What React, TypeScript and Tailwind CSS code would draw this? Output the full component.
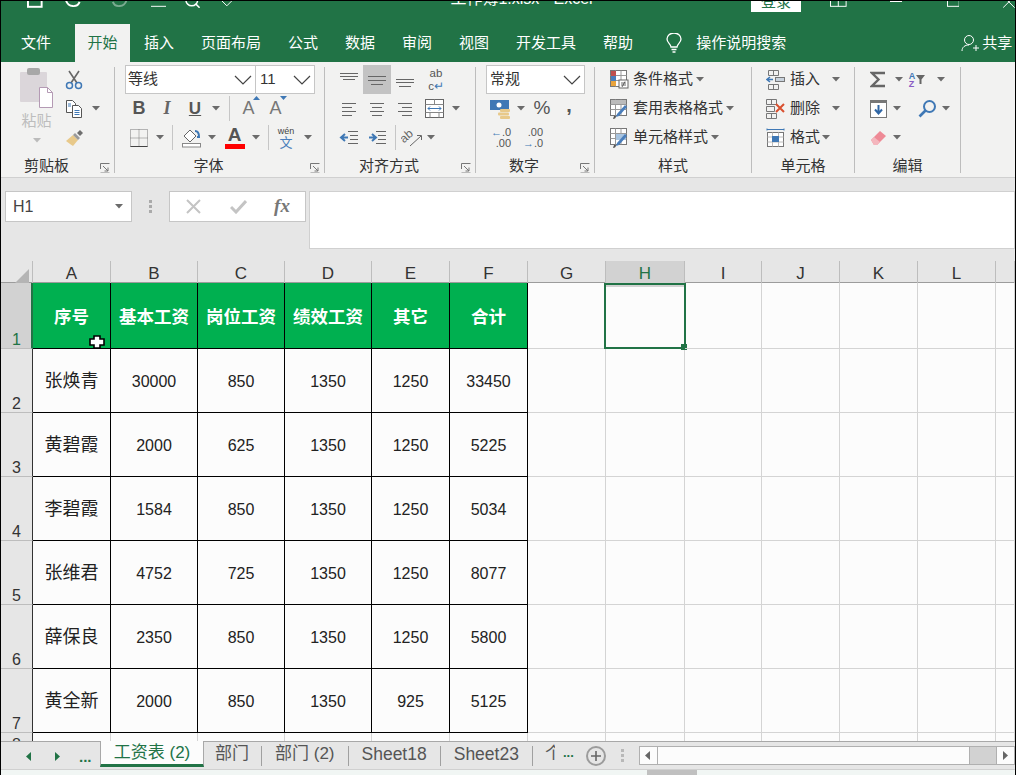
import type { ReactNode } from "react";

const green = "#217346";

const Caret = ({ className = "" }: { className?: string }) => (
  <svg width="8" height="5" viewBox="0 0 8 5" className={className}>
    <path d="M0 0h8L4 4.5z" fill="#6b6b6b" />
  </svg>
);

const Chevron = () => (
  <svg width="18" height="10" viewBox="0 0 18 10" fill="none" stroke="#444" strokeWidth="1.2">
    <path d="M1 1l8 8 8-8" />
  </svg>
);

const Launcher = () => (
  <svg width="10" height="10" viewBox="0 0 10 10" fill="none" stroke="#777">
    <path d="M.5 6V.5H9.5M3 3l5 5M8 4.5V8H4.5" />
    <path d="M.5 9.5h9" stroke="#bbb" />
  </svg>
);

const S = ({ c, children }: { c: string; children?: ReactNode }) => (
  <div className={"flex h-full items-center justify-center " + c}>{children}</div>
);

const Row = ({ c = "", children }: { c?: string; children: ReactNode }) => (
  <div className={"flex h-[29px] items-center whitespace-nowrap " + c}>{children}</div>
);

const VSep = ({ c }: { c: string }) => <div className={"h-[25px] w-px bg-[#c6c6c6] " + c} />;

const Lines = ({ ys, xs }: { ys: number[]; xs: [number, number][] }) => (
  <svg width="20" height="16" viewBox="0 0 20 16" stroke="#666" strokeWidth="1">
    {ys.map((y, i) => (
      <path key={i} d={`M${xs[i][0]} ${y + 0.5}H${xs[i][1]}`} />
    ))}
  </svg>
);

const Group = ({
  w,
  label,
  launcher,
  children,
}: {
  w: string;
  label: string;
  launcher?: boolean;
  children: ReactNode;
}) => (
  <div className={"flex h-[115px] flex-col pt-[3px] " + w}>
    <div className="h-[90px]">{children}</div>
    <div className="flex h-[22px] items-center text-[15px] text-[#333]">
      <span className="flex-1 text-center">{label}</span>
      {launcher && (
        <span className="flex w-[22px] justify-center pl-[3px] pt-[4px]">
          <Launcher />
        </span>
      )}
    </div>
  </div>
);

const Sep = () => <div className="mt-[5px] h-[106px] w-px bg-[#bdbdbd]" />;

const GridIcon = ({ tone }: { tone: "cond" | "table" | "cell" }) => (
  <svg width="22" height="22" viewBox="0 0 22 22" fill="none">
    <rect x="2.5" y="1.5" width="16" height="16" fill="#fff" stroke="#777" />
    <path d="M2.5 6.5h16M2.5 11.5h16M7.5 1.5v16M13 1.5v16" stroke="#999" />
    {tone === "cond" && (
      <>
        <rect x="3" y="2" width="5" height="5" fill="#c0504d" />
        <rect x="3" y="7" width="5" height="5" fill="#4a7ebb" />
        <rect x="3" y="12" width="5" height="5" fill="#e8a33d" />
        <rect x="11" y="11" width="9" height="8" fill="#fff" stroke="#666" />
        <path d="M13 14h5M13 16h5M17 12.5l-3 5.5" stroke="#444" strokeWidth=".8" />
      </>
    )}
    {tone === "table" && (
      <>
        <rect x="3" y="2" width="15" height="4" fill="#bbb" />
        <path d="M8 19l3-1 8-9-2-2-8 9z" fill="#4a7ebb" />
        <path d="M5 21c2 0 3-1 3-3l-2 0z" fill="#555" />
      </>
    )}
    {tone === "cell" && (
      <>
        <rect x="8" y="7" width="10" height="6" fill="#a8c4e0" />
        <path d="M8 19l3-1 8-9-2-2-8 9z" fill="#4a7ebb" />
        <path d="M5 21c2 0 3-1 3-3l-2 0z" fill="#555" />
      </>
    )}
  </svg>
);

const Ribbon = () => (
  <div className="flex h-[116px] border-b border-[#d0d0d0] bg-[#f2f2f1]">
    <Group w="w-[113px]" label="剪贴板" launcher>
      <div className="flex h-full">
        <div className="flex w-[61px] flex-col items-center pl-[10px] pt-[3px]">
          <svg width="36" height="40" viewBox="0 0 36 40">
            <rect x="1" y="4" width="27" height="30" rx="1" fill="#dbd6da" />
            <rect x="8" y="0" width="13" height="7" rx="2" fill="#a8a8a8" />
            <path d="M20.5 19.5h8l5 5v15h-13z" fill="#fff" stroke="#b49ab4" />
            <path d="M28.5 19.5v5h5" fill="none" stroke="#b49ab4" />
          </svg>
          <span className="mt-[3px] text-[15px] leading-[20px] text-[#bdbdbd]">粘贴</span>
          <Caret className="mt-[7px] opacity-40" />
        </div>
        <div className="flex flex-col">
          <Row>
            <S c="w-[24px]">
              <svg width="18" height="20" viewBox="0 0 18 20" fill="none">
                <path d="M4 1l8 12M14 1L6 13" stroke="#666" strokeWidth="1.6" />
                <circle cx="4.5" cy="15.5" r="3" stroke="#3f78b5" strokeWidth="1.5" />
                <circle cx="13.5" cy="15.5" r="3" stroke="#3f78b5" strokeWidth="1.5" />
              </svg>
            </S>
          </Row>
          <Row>
            <S c="w-[24px]">
              <svg width="18" height="20" viewBox="0 0 18 20" fill="none">
                <path d="M1.5 1.5h6l3 3v9h-9z" fill="#fff" stroke="#555" />
                <path d="M7.5 6.5h6l3 3v9h-9z" fill="#fff" stroke="#555" />
                <path d="M9.5 11.5h5M9.5 13.5h5M9.5 15.5h5" stroke="#3f78b5" />
                <path d="M3 5h3M3 7h3" stroke="#3f78b5" />
              </svg>
            </S>
            <Caret className="ml-[6px]" />
          </Row>
          <Row>
            <S c="w-[26px]">
              <svg width="20" height="18" viewBox="0 0 20 18">
                <path d="M1 12l7-6 5 5-5 6-3-2z" fill="#e8c98a" />
                <path d="M8 6l5 5 2-2-5-5z" fill="#9a9a9a" />
                <path d="M12 4l3-3 3 3-3 3z" fill="#6f6f6f" />
              </svg>
            </S>
          </Row>
        </div>
      </div>
    </Group>
    <Sep />
    <Group w="w-[209px]" label="字体" launcher>
      <div className="pl-[10px]">
        <div className="flex h-[29px]">
          <div className="flex w-[131px] items-center justify-between border border-[#c6c6c6] bg-white pl-[2px] pr-[3px] text-[15px] text-[#333]">
            等线
            <Chevron />
          </div>
          <div className="-ml-px flex w-[60px] items-center justify-between border border-[#c6c6c6] bg-white pl-[4px] pr-[3px] text-[15px] text-[#333]">
            11
            <Chevron />
          </div>
        </div>
        <Row>
          <S c="w-[28px] text-[18px] font-bold text-[#555]">B</S>
          <S c="w-[28px] text-[18px] font-bold italic text-[#666] [font-family:'Liberation_Serif']">I</S>
          <S c="w-[28px] text-[17px] font-bold text-[#555] underline">U</S>
          <S c="w-[14px]">
            <Caret />
          </S>
          <VSep c="ml-[6px]" />
          <S c="w-[27px] ml-[5px]">
            <span className="relative text-[18px] text-[#777]">
              A
              <svg width="7" height="4" viewBox="0 0 7 4" className="absolute -right-[5px] top-[1px]">
                <path d="M0 4h7L3.5 0z" fill="#3f78b5" />
              </svg>
            </span>
          </S>
          <S c="w-[27px]">
            <span className="relative text-[18px] text-[#777]">
              A
              <svg width="7" height="4" viewBox="0 0 7 4" className="absolute -right-[5px] top-[1px]">
                <path d="M0 0h7L3.5 4z" fill="#3f78b5" />
              </svg>
            </span>
          </S>
        </Row>
        <Row>
          <S c="w-[28px]">
            <svg width="18" height="18" viewBox="0 0 18 18" fill="none" stroke="#777" strokeDasharray="1 1">
              <path d="M.5.5h17v17H.5zM9 .5v17M.5 9h17" />
              <path d="M.5 17.5h17" stroke="#444" strokeDasharray="0" />
            </svg>
          </S>
          <S c="w-[14px]">
            <Caret />
          </S>
          <VSep c="ml-[5px]" />
          <S c="w-[27px] ml-[5px]">
            <svg width="21" height="20" viewBox="0 0 21 20" fill="none">
              <path d="M3 8l6-6 6 6-6 6z" fill="#fff" stroke="#666" />
              <path d="M14 3c3 0 4 3 4 6l-2 0" stroke="#3f78b5" strokeWidth="2" />
              <rect x="1.5" y="15.5" width="18" height="3.5" fill="#fff" stroke="#888" />
            </svg>
          </S>
          <S c="w-[14px]">
            <Caret />
          </S>
          <S c="w-[29px] ml-px">
            <div className="flex flex-col items-center">
              <span className="text-[19px] font-bold leading-[17px] text-[#555]">A</span>
              <span className="mt-[1px] h-[5px] w-[20px] bg-[#ff0000]" />
            </div>
          </S>
          <S c="w-[14px]">
            <Caret />
          </S>
          <VSep c="ml-[5px]" />
          <S c="w-[26px] ml-[4px]">
            <div className="flex flex-col items-center leading-none text-[#4a7ebb]">
              <span className="text-[9px] text-[#444]">wén</span>
              <span className="text-[13px]">文</span>
            </div>
          </S>
          <S c="w-[14px] ml-[2px]">
            <Caret />
          </S>
        </Row>
      </div>
    </Group>
    <Sep />
    <Group w="w-[150px]" label="对齐方式" launcher>
      <div className="pl-[10px]">
        <Row>
          <S c="w-[28px]">
            <Lines ys={[1, 4, 7]} xs={[[1, 19], [1, 19], [4, 16]]} />
          </S>
          <S c="w-[28px] bg-[#c3c3c3]">
            <Lines ys={[4, 8, 12]} xs={[[1, 19], [1, 19], [4, 16]]} />
          </S>
          <S c="w-[28px]">
            <Lines ys={[7, 10, 14]} xs={[[1, 19], [1, 19], [4, 16]]} />
          </S>
          <S c="w-[28px] ml-[3px]">
            <div className="flex flex-col items-center text-[11.5px] leading-[13px] text-[#555]">
              <span>ab</span>
              <span>
                c<span className="text-[#3f78b5]">↵</span>
              </span>
            </div>
          </S>
        </Row>
        <Row>
          <S c="w-[28px]">
            <Lines ys={[2, 6, 10, 14]} xs={[[3, 17], [3, 13], [3, 17], [3, 13]]} />
          </S>
          <S c="w-[28px]">
            <Lines ys={[2, 6, 10, 14]} xs={[[3, 17], [5, 15], [3, 17], [5, 15]]} />
          </S>
          <S c="w-[28px]">
            <Lines ys={[2, 6, 10, 14]} xs={[[3, 17], [7, 17], [3, 17], [7, 17]]} />
          </S>
          <S c="w-[28px] ml-[2px]">
            <svg width="20" height="20" viewBox="0 0 20 20" fill="none">
              <rect x=".5" y=".5" width="18" height="18" fill="#fff" stroke="#666" />
              <path d="M.5 5.5h18M.5 13.5h18M9.5.5v5M5 13.5v5M14 13.5v5" stroke="#888" />
              <path d="M3 9.5h13M5 7.5l-2 2 2 2M14 7.5l2 2-2 2" stroke="#3f78b5" />
            </svg>
          </S>
          <S c="w-[14px]">
            <Caret />
          </S>
        </Row>
        <Row>
          <S c="w-[28px]">
            <svg width="20" height="16" viewBox="0 0 20 16" fill="none">
              <path d="M9 1.5h10M11 5.5h8M11 9.5h8M9 13.5h10" stroke="#666" />
              <path d="M9 7.5H3M6 4L2 7.5 6 11" stroke="#3f78b5" strokeWidth="2" />
            </svg>
          </S>
          <S c="w-[28px]">
            <svg width="20" height="16" viewBox="0 0 20 16" fill="none">
              <path d="M9 1.5h10M11 5.5h8M11 9.5h8M9 13.5h10" stroke="#666" />
              <path d="M2 7.5h6M5 4l4 3.5L5 11" stroke="#3f78b5" strokeWidth="2" />
            </svg>
          </S>
          <VSep c="ml-[4px]" />
          <S c="w-[26px] ml-[3px]">
            <svg width="22" height="20" viewBox="0 0 22 20" fill="none">
              <text x="0" y="12" fontSize="12" fill="#666" transform="rotate(-40 6 10)" fontFamily="Liberation Sans">
                ab
              </text>
              <path d="M9 18L20 8M16 7.5h4.5V12" stroke="#666" />
            </svg>
          </S>
          <S c="w-[12px]">
            <Caret />
          </S>
        </Row>
      </div>
    </Group>
    <Sep />
    <Group w="w-[118px]" label="数字" launcher>
      <div className="pl-[10px]">
        <div className="flex h-[29px] w-[99px] items-center justify-between border border-[#c6c6c6] bg-white pl-[3px] pr-[3px] text-[15px] text-[#333]">
          常规
          <Chevron />
        </div>
        <Row>
          <S c="w-[26px] ml-[2px]">
            <svg width="22" height="20" viewBox="0 0 22 20">
              <rect x="0" y="1" width="19" height="10" fill="#3f78b5" />
              <circle cx="9" cy="6" r="2.5" fill="#fff" />
              <rect x="10" y="10" width="10" height="3" rx="1" fill="#e8c98a" />
              <rect x="8" y="13.5" width="11" height="3" rx="1" fill="#e8c98a" />
              <rect x="10" y="17" width="10" height="3" rx="1" fill="#e8c98a" />
            </svg>
          </S>
          <S c="w-[14px]">
            <Caret />
          </S>
          <S c="w-[28px] text-[19px] text-[#555]">%</S>
          <S c="w-[26px] pb-[8px] text-[20px] font-bold leading-none text-[#555]">,</S>
        </Row>
        <Row>
          <S c="w-[26px] ml-[2px]">
            <div className="flex flex-col items-end text-[11px] leading-[11px] text-[#555]">
              <span>
                <span className="text-[#3f78b5]">←</span>.0
              </span>
              <span>.00</span>
            </div>
          </S>
          <S c="w-[32px] ml-[3px]">
            <div className="flex flex-col items-end text-[11px] leading-[11px] text-[#555]">
              <span>.00</span>
              <span>
                <span className="text-[#3f78b5]">→</span>.0
              </span>
            </div>
          </S>
        </Row>
      </div>
    </Group>
    <Sep />
    <Group w="w-[156px]" label="样式">
      <div className="pl-[12px] text-[15px] text-[#333]">
        <Row>
          <S c="w-[24px]">
            <GridIcon tone="cond" />
          </S>
          <span className="ml-[2px]">条件格式</span>
          <Caret className="ml-[3px]" />
        </Row>
        <Row>
          <S c="w-[24px]">
            <GridIcon tone="table" />
          </S>
          <span className="ml-[2px]">套用表格格式</span>
          <Caret className="ml-[3px]" />
        </Row>
        <Row>
          <S c="w-[24px]">
            <GridIcon tone="cell" />
          </S>
          <span className="ml-[2px]">单元格样式</span>
          <Caret className="ml-[3px]" />
        </Row>
      </div>
    </Group>
    <Sep />
    <Group w="w-[102px]" label="单元格">
      <div className="pl-[12px] text-[15px] text-[#333]">
        <Row>
          <S c="w-[24px]">
            <svg width="20" height="20" viewBox="0 0 20 20" fill="none" stroke="#777">
              <path d="M2.5.5h10v5h-10zM2.5 14.5h10v5h-10zM7.5.5v5M7.5 14.5v5" />
              <rect x="9.5" y="7.5" width="9" height="4" fill="#c9d3dd" />
              <path d="M1 9.5h6M4 7l-3 2.5L4 12" stroke="#3f78b5" strokeWidth="1.5" />
            </svg>
          </S>
          <span className="ml-[2px]">插入</span>
          <Caret className="ml-[12px]" />
        </Row>
        <Row>
          <S c="w-[24px]">
            <svg width="20" height="20" viewBox="0 0 20 20" fill="none" stroke="#777">
              <path d="M.5.5h10v5H.5zM.5 14.5h10v5H.5zM5.5.5v5M5.5 14.5v5M.5 7.5h8v5h-8z" />
              <path d="M10 5l8 8M18 5l-8 8" stroke="#d9502f" strokeWidth="2" />
            </svg>
          </S>
          <span className="ml-[2px]">删除</span>
          <Caret className="ml-[12px]" />
        </Row>
        <Row>
          <S c="w-[24px]">
            <svg width="20" height="20" viewBox="0 0 20 20" fill="none" stroke="#777">
              <path d="M1 1.5h17M1 .5v2M18 .5v2" stroke="#3f78b5" />
              <rect x="1.5" y="4.5" width="16" height="14" fill="#fff" />
              <path d="M1.5 9h16M1.5 14h16M6.5 4.5v14M12.5 4.5v14" stroke="#bbb" />
              <rect x="6" y="8" width="7" height="6" fill="#3f78b5" stroke="none" />
            </svg>
          </S>
          <span className="ml-[2px]">格式</span>
          <Caret className="ml-[2px]" />
        </Row>
      </div>
    </Group>
    <Sep />
    <Group w="w-[105px]" label="编辑">
      <div className="pl-[11px]">
        <Row>
          <S c="w-[24px]">
            <svg width="16" height="17" viewBox="0 0 16 17" fill="none" stroke="#666" strokeWidth="2.4">
              <path d="M15 2H2l6.5 6.5L2 15h13" />
            </svg>
          </S>
          <S c="w-[18px]">
            <Caret />
          </S>
          <S c="w-[18px]">
            <div className="flex flex-col text-[9px] font-bold leading-[8px]">
              <span className="text-[#3f78b5]">A</span>
              <span className="text-[#8a5cc4]">Z</span>
            </div>
            <svg width="9" height="9" viewBox="0 0 9 9" className="ml-[1px]">
              <path d="M0 0h9L5.5 4.5V9h-2V4.5z" fill="#666" />
            </svg>
          </S>
          <S c="w-[20px] pl-[9px]">
            <Caret />
          </S>
        </Row>
        <Row>
          <S c="w-[24px]">
            <svg width="17" height="18" viewBox="0 0 17 18" fill="none">
              <rect x=".5" y=".5" width="16" height="17" fill="#fff" stroke="#777" />
              <rect x="1" y="1" width="15" height="2" fill="#777" />
              <path d="M8.5 5v8M5 9.5l3.5 4 3.5-4" stroke="#2f66a5" strokeWidth="2" />
            </svg>
          </S>
          <S c="w-[14px]">
            <Caret />
          </S>
          <S c="w-[26px] ml-[8px] pl-[4px]">
            <svg width="19" height="19" viewBox="0 0 19 19" fill="none" stroke="#3f78b5" strokeWidth="2">
              <circle cx="11.5" cy="7.5" r="5.5" />
              <path d="M7.5 11.5L1.5 17.5" strokeWidth="2.6" />
            </svg>
          </S>
          <S c="w-[14px] pl-[2px]">
            <Caret />
          </S>
        </Row>
        <Row>
          <S c="w-[24px]">
            <svg width="17" height="16" viewBox="0 0 17 16">
              <path d="M1 10l9-9 6 5-9 9H4z" fill="#ee8a96" />
              <path d="M1 10l3-3 6 5-3 3H4z" fill="#f4b6bd" />
            </svg>
          </S>
          <S c="w-[14px]">
            <Caret />
          </S>
        </Row>
      </div>
    </Group>
    <Sep />
  </div>
);

const Bar = () => (
  <div className="h-[83px] bg-[#e6e6e6] pt-[13px]">
    <div className="flex items-start">
      <div className="ml-[4px] flex h-[31px] w-[127px] items-center justify-between border border-[#c6c6c6] bg-white pl-[7px] pr-[8px] text-[16px] text-[#444]">
        H1
        <Caret />
      </div>
      <div className="flex h-[31px] w-[37px] flex-col items-center justify-center gap-[2px]">
        <span className="h-[3px] w-[3px] bg-[#aaa]" />
        <span className="h-[3px] w-[3px] bg-[#aaa]" />
        <span className="h-[3px] w-[3px] bg-[#aaa]" />
      </div>
      <div className="flex h-[31px] w-[137px] items-center border border-[#c6c6c6] bg-white">
        <S c="w-[46px]">
          <svg width="15" height="15" viewBox="0 0 15 15" stroke="#c4c4c4" strokeWidth="2">
            <path d="M1 1l13 13M14 1L1 14" />
          </svg>
        </S>
        <S c="w-[44px]">
          <svg width="17" height="15" viewBox="0 0 17 15" fill="none" stroke="#c4c4c4" strokeWidth="3">
            <path d="M1 8l5 5L16 2" />
          </svg>
        </S>
        <S c="w-[44px] text-[19px] font-bold italic text-[#777] [font-family:'Liberation_Serif']">fx</S>
      </div>
      <div className="ml-[3px] h-[58px] flex-1 border border-[#d0d0d0] bg-white" />
    </div>
  </div>
);

const colWidths = "grid-cols-[32px_78px_87px_87px_87px_78px_78px_78px_79px_77px_78px_78px_78px_1fr]";
const letters = ["A", "B", "C", "D", "E", "F", "G", "H", "I", "J", "K", "L", ""];

const rows = [
  ["张焕青", "30000", "850", "1350", "1250", "33450"],
  ["黄碧霞", "2000", "625", "1350", "1250", "5225"],
  ["李碧霞", "1584", "850", "1350", "1250", "5034"],
  ["张维君", "4752", "725", "1350", "1250", "8077"],
  ["薛保良", "2350", "850", "1350", "1250", "5800"],
  ["黄全新", "2000", "850", "1350", "925", "5125"],
];
const heads = ["序号", "基本工资", "岗位工资", "绩效工资", "其它", "合计"];
const blanks = [0, 1, 2, 3, 4, 5, 6];

const Sheet = () => (
  <>
    <div className={"grid h-[22px] border-b border-[#9c9c9c] bg-[#e6e6e6] " + colWidths}>
      <div className="flex items-end justify-end border-r border-[#bdbdbd] pb-[3px] pr-[3px]">
        <svg width="15" height="15" viewBox="0 0 15 15">
          <path d="M15 0v15H0z" fill="#b4b4b4" />
        </svg>
      </div>
      {letters.map((l, i) => (
        <div
          key={i}
          className={
            "flex items-center justify-center border-r border-[#bdbdbd] text-[17px] " +
            (l === "H" ? "bg-[#d2d2d2] text-[#217346]" : "text-[#333]")
          }
        >
          {l}
        </div>
      ))}
    </div>
    <div className={"grid h-[458px] auto-rows-[64px] grid-rows-[66px] overflow-hidden bg-[#fcfcfc] " + colWidths}>
      <div className="flex items-end border-b border-r-2 border-b-[#bdbdbd] border-r-[#217346] bg-[#d2d2d2] pl-[11px] text-[16px] leading-[16px] text-[#217346]">
        1
      </div>
      {heads.map((h, i) => (
        <div
          key={h}
          className="relative flex items-center justify-center border-b border-r border-black bg-[#00b050] pt-[4px] text-[17.5px] font-bold text-white"
        >
          {h}
          {i === 0 && (
            <svg width="16" height="14" viewBox="0 0 16 14" className="absolute bottom-[-1px] right-[5px]">
              <path d="M5 1h6v3h4v6h-4v3H5v-3H1V4h4z" fill="#fff" stroke="#000" strokeWidth="1.6" />
            </svg>
          )}
        </div>
      ))}
      {letters.slice(6).map((l, i) => (
        <div key={i} className="relative border-b border-r border-[#d4d4d4]">
          {l === "H" && (
            <div className="absolute -bottom-px -left-[2px] -right-[2px] top-0 border-2 border-[#217346]">
              <span className="absolute -bottom-[3px] -right-[3px] h-[6px] w-[6px] bg-[#217346]" />
            </div>
          )}
        </div>
      ))}
      {rows.map((r, ri) => (
        <div key={ri} className="contents">
          <div className="flex items-end border-b border-r border-b-[#bdbdbd] border-r-[#333] bg-[#e6e6e6] pl-[11px] text-[16px] leading-[16px] text-[#333]">
            {ri + 2}
          </div>
          {r.map((v, ci) => (
            <div
              key={ci}
              className={
                "flex items-center justify-center border-b border-r border-black pt-[2px] text-[#222] " +
                (ci === 0 ? "text-[18px]" : "text-[16px]")
              }
            >
              {v}
            </div>
          ))}
          {blanks.map((b) => (
            <div key={b} className="border-b border-r border-[#d4d4d4]" />
          ))}
        </div>
      ))}
      <div className="flex border-r border-[#333] bg-[#e6e6e6] pl-[11px] pt-[4px] text-[16px] leading-[16px] text-[#333]">8</div>
      {letters.map((l, i) => (
        <div key={i} className="border-r border-[#d4d4d4]" />
      ))}
    </div>
  </>
);

const TabSep = () => <span className="mt-[4px] h-[20px] w-px shrink-0 bg-[#a0a0a0]" />;

const Tabs = () => (
  <div className="flex h-[28px] items-start whitespace-nowrap border-t border-[#a8a8a8] bg-[#e6e6e6] text-[#555]">
    <div className="flex h-[26px] w-[99px] items-center pl-[25px] pt-[3px]">
      <svg width="6" height="9" viewBox="0 0 6 9" className="mr-[22px]">
        <path d="M5 0v9L0 4.5z" fill={green} />
      </svg>
      <svg width="6" height="9" viewBox="0 0 6 9" className="mr-[19px]">
        <path d="M1 0v9l5-4.5z" fill={green} />
      </svg>
      <span className="text-[15px] font-bold leading-none text-[#217346]">...</span>
    </div>
    <div className="-mt-px flex h-[26px] w-[104px] items-center justify-center border-x border-[#a8a8a8] border-b-[3px] border-b-[#217346] bg-[#fcfcfc] text-[17px] text-[#217346]">
      工资表 (2)
    </div>
    <span className="ml-[11px] mr-[12px] text-[17px] leading-[24px]">部门</span>
    <TabSep />
    <span className="mx-[13px] text-[17px] leading-[24px]">部门 (2)</span>
    <TabSep />
    <span className="mx-[13px] text-[17.5px] leading-[24px]">Sheet18</span>
    <TabSep />
    <span className="mx-[13px] text-[17.5px] leading-[24px]">Sheet23</span>
    <TabSep />
    <span className="ml-[12px] w-[10px] overflow-hidden text-[17px] leading-[24px]">个</span>
    <span className="ml-[8px] mt-[4px] text-[13px] font-bold leading-[14px] text-[#217346]">...</span>
    <div className="ml-[12px] mt-[4px] flex h-[20px] w-[20px] items-center justify-center rounded-full border-2 border-[#9c9c9c]">
      <svg width="10" height="10" viewBox="0 0 10 10" stroke="#666" strokeWidth="1.6">
        <path d="M5 0v10M0 5h10" />
      </svg>
    </div>
    <div className="ml-[15px] mt-[7px] flex flex-col gap-[2px]">
      <span className="h-[3px] w-[3px] bg-[#b8b8b8]" />
      <span className="h-[3px] w-[3px] bg-[#b8b8b8]" />
      <span className="h-[3px] w-[3px] bg-[#b8b8b8]" />
    </div>
    <div className="ml-[15px] mt-[4px] flex h-[19px] w-[376px] shrink-0 border border-[#b0b0b0] bg-[#fcfcfc]">
      <S c="w-[18px] border-r border-[#b0b0b0]">
        <svg width="6" height="9" viewBox="0 0 6 9">
          <path d="M5 0v9L0 4.5z" fill="#666" />
        </svg>
      </S>
      <div className="flex-1" />
      <div className="w-[27px] border-l border-[#b0b0b0] bg-[#d2d2d2]" />
      <S c="w-[18px] border-l border-[#b0b0b0]">
        <svg width="6" height="9" viewBox="0 0 6 9">
          <path d="M1 0v9l5-4.5z" fill="#666" />
        </svg>
      </S>
    </div>
  </div>
);

export default function App() {
  return (
    <div className="h-[775px] w-[1017px] overflow-hidden bg-white [font-family:'Liberation_Sans','Noto_Sans_CJK_SC',sans-serif]">
      <div className="w-[1016px] overflow-hidden border-x border-t border-x-black border-t-black">
        <div className="h-[23px] overflow-hidden bg-[#217346]">
          <div className="relative -mt-[11px] flex h-[18px] items-start text-white">
            <svg width="16" height="18" viewBox="0 0 16 18" className="ml-[26px]" fill="none" stroke="#fff" strokeWidth="2">
              <rect x="1" y="3" width="14" height="14" />
            </svg>
            <svg width="22" height="18" viewBox="0 0 22 18" className="ml-[20px]" fill="none" stroke="#fff" strokeWidth="2">
              <path d="M3 10c2 8 12 8 14 2" />
            </svg>
            <svg width="22" height="18" viewBox="0 0 22 18" className="ml-[24px] opacity-40" fill="none" stroke="#fff" strokeWidth="2">
              <path d="M19 10c-2 8-12 8-14 2" />
            </svg>
            <svg width="16" height="18" viewBox="0 0 16 18" className="ml-[21px]" stroke="#fff">
              <path d="M0 16.5h16" />
            </svg>
            <svg width="18" height="18" viewBox="0 0 18 18" className="ml-[17px]" fill="none" stroke="#fff" strokeWidth="1.5">
              <circle cx="9" cy="10" r="6" />
              <path d="M13 14l4 4" />
            </svg>
            <svg width="12" height="18" viewBox="0 0 12 18" className="ml-[20px]" fill="none" stroke="#fff">
              <path d="M1 11l5 5 5-5" />
            </svg>
            <span className="ml-[218px] w-[160px] whitespace-nowrap text-[16px] leading-[18px]">工作簿1.xlsx  -  Excel</span>
            <span className="ml-[144px] flex h-[22px] w-[52px] items-start justify-center bg-white pt-[3px] text-[15px] leading-[18px] text-[#217346]">
              登录
            </span>
            <svg width="17" height="18" viewBox="0 0 17 18" className="ml-[29px]" fill="none" stroke="#fff">
              <rect x=".5" y="5.5" width="16" height="11" />
              <path d="M8.5 5.5v11" />
            </svg>
            <span className="ml-[43px] mt-[11px] h-px w-[12px] bg-white" />
            <svg width="13" height="18" viewBox="0 0 13 18" className="ml-[45px]" fill="none" stroke="#fff">
              <rect x=".5" y="5.5" width="12" height="11" />
            </svg>
            <svg width="12" height="18" viewBox="0 0 12 18" className="ml-[44px]" fill="none" stroke="#fff">
              <path d="M0 6l12 12M12 6L0 18" />
            </svg>
          </div>
        </div>
        <div className="flex h-[38px] whitespace-nowrap bg-[#217346] text-[15px] text-white">
          <span className="flex w-[74px] items-center pl-[20px]">文件</span>
          <span className="flex w-[55px] items-center justify-center bg-[#f2f2f1] text-[#217346]">开始</span>
          <div className="flex flex-1 items-center gap-[27px] pl-[14px]">
            <span>插入</span>
            <span>页面布局</span>
            <span>公式</span>
            <span>数据</span>
            <span>审阅</span>
            <span>视图</span>
            <span>开发工具</span>
            <span>帮助</span>
            <svg width="16" height="20" viewBox="0 0 16 20" className="ml-[6px] shrink-0" fill="none" stroke="#fff" strokeWidth="1.3">
              <path d="M5 14c0-3-4-4-4-8a7 6 0 0 1 14 0c0 4-4 5-4 8z" />
              <path d="M5.5 16.5h5M6.5 19h3" />
            </svg>
            <span className="-ml-[13px]">操作说明搜索</span>
            <div className="ml-[148px] flex items-center">
              <svg width="18" height="18" viewBox="0 0 18 18" fill="none" stroke="#fff" className="shrink-0">
                <circle cx="8" cy="6" r="4.5" />
                <path d="M1 17c0-4 3-6 7-6M12 14h6M15 11v6" />
              </svg>
              <span className="ml-[3px]">共享</span>
            </div>
          </div>
        </div>
        <Ribbon />
        <Bar />
        <Sheet />
        <Tabs />
        <div className="h-[6px] border-t border-[#d0d0d0] bg-[#f1f6f4]">
          <div className="ml-[646px] h-full w-[50px] bg-[#c0c0c0]" />
        </div>
      </div>
    </div>
  );
}
